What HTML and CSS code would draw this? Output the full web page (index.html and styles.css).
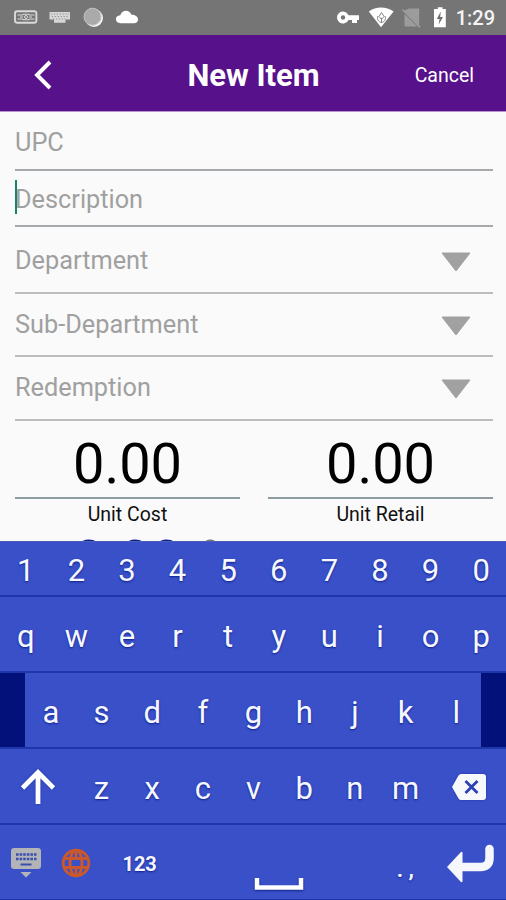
FILE: index.html
```html
<!DOCTYPE html>
<html lang="en">
<head>
    <meta charset="UTF-8">
    <meta name="viewport" content="width=device-width, initial-scale=1.0">
    <title>New Item</title>
    <link rel="stylesheet" href="styles.css">
</head>
<body>

    <div class="status-bar">
        <svg class="status-icons" width="506" height="34" viewBox="0 0 506 34">
            <!-- left: vpn box, keyboard, sync, cloud -->
            <g fill="none" stroke="#d9d9d9" stroke-width="1.9">
                <rect x="15" y="11.2" width="21.4" height="11.6" rx="2.2"/>
                <path d="M17.5 15h4.500l2-.7h4l2 .7h4.500M17.500 19h4.500l2 .8h4l2-.8h4.500M20 17h3M29 17h3" stroke-width="1.1"/>
                <circle cx="26" cy="17" r="1.5" stroke-width="1"/>
            </g>
            <path fill="#d6d6d6" d="M49.500 12h20.500v7.500h-4.500v3.200h-11.500v-3.200h-4.500z"/>
            <path stroke="#8d8d8d" stroke-width="1" stroke-dasharray="1.2 1.7" d="M51 14h18M52 16.500h16M53 19h13"/>
            <circle cx="94" cy="18" r="9" fill="#f2f2f2"/>
            <circle cx="92.500" cy="16.700" r="8.500" fill="#aaa" stroke="#c4c4c4" stroke-width="1"/>
            <path fill="#fff" d="M120.500 23.200c-6 0-6-7.700-.3-7.900 1.500-5.700 9-6.500 11.300-.6 4-.3 6.500 2.300 6.500 4.700 0 2.200-1.600 3.800-4 3.800z"/>
            <!-- right: key, wifi, no sim, battery -->
            <path fill="#fff" fill-rule="evenodd" d="M348.500 15.200a6 6 0 1 0 0 4.700h3.500v3.200h5v-3.200h2v-4.700zM343 15.300a2.200 2.200 0 1 1 0 4.400 2.200 2.200 0 0 1 0-4.400z"/>
            <path fill="#fff" d="M368.800 11.500c7-5.300 17.500-5.300 24.800 0L381 27.200z"/>
            <path fill="none" stroke="#858585" stroke-width="1" d="M381.500 12.500l-2.500 4 2.500 2.800 2.500-2.800zM378 16c-1.500 3 .5 6 3.500 6.500 3-.5 5-3.500 3.500-6.500M381.500 18v5"/>
            <path fill="#9c9c9c" d="M409 8.500h10.200v17l-14.700-14.700zM404.500 13.800v12.800h12.700z"/>
            <path stroke="#a0a0a0" stroke-width="1.500" d="M402.500 9.500l17.500 17.700"/>
            <path fill="#fff" d="M434 9h3.800V7.300h4.700V9h3.300v18.300H434z"/>
            <path fill="#6f6f6f" d="M440.800 11.500l-4 7.500h2.700l-.8 5.500 4.300-7.500h-2.800z"/>
        </svg>
        <span class="clock">1:29</span>
    </div>

    <div class="header">
        <svg class="back" width="20" height="32" viewBox="0 0 20 32">
            <path d="M17 3L4 16l13 13" fill="none" stroke="#fff" stroke-width="3.900"/>
        </svg>
        <h1>New Item</h1>
        <span class="cancel">Cancel</span>
    </div>

    <div class="form">
        <div class="field upc">UPC</div>
        <div class="field description"><span class="cursor"></span>Description</div>
        <div class="field select">Department
            <svg width="30" height="20" viewBox="0 0 30 20"><path d="M1 1h28L15 19z" fill="#a1a1a1" stroke="#a1a1a1" stroke-linejoin="round"/></svg>
        </div>
        <div class="field select">Sub-Department
            <svg width="30" height="20" viewBox="0 0 30 20"><path d="M1 1h28L15 19z" fill="#a1a1a1" stroke="#a1a1a1" stroke-linejoin="round"/></svg>
        </div>
        <div class="field select">Redemption
            <svg width="30" height="20" viewBox="0 0 30 20"><path d="M1 1h28L15 19z" fill="#a1a1a1" stroke="#a1a1a1" stroke-linejoin="round"/></svg>
        </div>
        <div class="prices">
            <div class="price">
                <div class="amount">0.00</div>
                <div class="label">Unit Cost</div>
            </div>
            <div class="price">
                <div class="amount">0.00</div>
                <div class="label">Unit Retail</div>
            </div>
        </div>
        <div class="margin-row"><span>0.00</span><span class="percent">%</span></div>
    </div>

    <div class="keyboard">
        <div class="keys numbers">
            <span>1</span><span>2</span><span>3</span><span>4</span><span>5</span><span>6</span><span>7</span><span>8</span><span>9</span><span>0</span>
        </div>
        <div class="keys">
            <span>q</span><span>w</span><span>e</span><span>r</span><span>t</span><span>y</span><span>u</span><span>i</span><span>o</span><span>p</span>
        </div>
        <div class="keys middle">
            <div class="edge"></div>
            <span>a</span><span>s</span><span>d</span><span>f</span><span>g</span><span>h</span><span>j</span><span>k</span><span>l</span>
            <div class="edge"></div>
        </div>
        <div class="keys letters">
            <span class="wide">
                <svg width="36" height="36" viewBox="0 0 36 36"><path d="M18 35V4M2.500 19L18 3.500 33.500 19" fill="none" stroke="#fff" stroke-width="4.800"/></svg>
            </span>
            <span>z</span><span>x</span><span>c</span><span>v</span><span>b</span><span>n</span><span>m</span>
            <span class="wide">
                <svg class="delete" width="36" height="28" viewBox="0 0 36 28">
                    <path d="M10 1h22q3 0 3 3v20q0 3-3 3H10q-1.500 0-2.500-1.500L1 14 7.500 2.500Q8.500 1 10 1z" fill="#f7f8fc"/>
                    <path d="M14.500 8l12 12M26.500 8l-12 12" stroke="#2b41b5" stroke-width="2.800"/>
                </svg>
            </span>
        </div>
        <div class="keys bottom">
            <span class="icon">
                <svg width="32" height="32" viewBox="0 0 32 32">
                    <path d="M4 1h24q3 0 3 3v15q0 3-3 3H4q-3 0-3-3V4q0-3 3-3zM10.500 25h11L16 30.500z" fill="#b3b4b8"/>
                    <path d="M6 7.500h20.500M6 12h20.500" stroke="#3a4fae" stroke-width="2.500" stroke-dasharray="2.600 1"/>
                    <path d="M10.500 17.500h11" stroke="#3a4fae" stroke-width="2"/>
                </svg>
            </span>
            <span class="icon">
                <svg width="30" height="30" viewBox="0 0 30 30">
                    <g fill="none" stroke="#c9582e" stroke-width="3">
                        <circle cx="15" cy="15" r="12.800"/>
                        <ellipse cx="15" cy="15" rx="6" ry="12.800"/>
                        <path d="M15 2v10M15 18v10M3.500 10.500h23M3.500 19.500h23" stroke-width="2.800"/>
                    </g>
                </svg>
            </span>
            <span class="mode">123</span>
            <span class="space">
                <svg width="52" height="18" viewBox="0 0 52 18"><path d="M4 3v9.500h44V3" fill="none" stroke="#fff" stroke-width="4.500"/></svg>
            </span>
            <span class="punctuation">. ,</span>
            <span class="enter">
                <svg width="50" height="40" viewBox="0 0 50 40">
                    <path d="M43.500 6v9q0 9-9 9H15" fill="none" stroke="#f7f8fc" stroke-width="8.500" stroke-linecap="round"/>
                    <path d="M1 24L15 9q1.500-1 1.500 1v28q0 2-1.500 1z" fill="#f7f8fc"/>
                </svg>
            </span>
        </div>
    </div>

</body>
</html>
```
FILE: styles.css
```css
* {
    box-sizing: border-box;
}

body {
    margin: 0;
    width: 506px;
    height: 900px;
    overflow: hidden;
    font-family: Roboto, sans-serif;
    background-color: #fafafa;
}

svg {
    display: block;
}

.status-bar {
    position: relative;
    height: 35px;
    background-color: #757575;
}

.clock {
    position: absolute;
    right: 11px;
    top: 6px;
    font-size: 20px;
    line-height: 24px;
    color: #f5f5f5;
    font-weight: 500;
}

.header {
    display: grid;
    grid-template-columns: 140px 1fr 140px;
    align-items: center;
    height: 77px;
    background-color: #57118b;
    border-bottom: 1px solid #b795cc;
    color: #fff;
}

.back {
    margin-left: 33px;
    margin-top: 3px;
}

.header h1 {
    margin: 0;
    padding-top: 5px;
    padding-left: 1px;
    font-size: 31px;
    line-height: 36px;
    font-weight: 700;
    text-align: center;
    white-space: nowrap;
}

.cancel {
    padding-right: 32px;
    padding-top: 4px;
    font-size: 19.5px;
    text-align: right;
}

.form {
    height: 429px;
    padding: 0 13px 0 15px;
    overflow: hidden;
}

.field {
    display: flex;
    align-items: center;
    justify-content: space-between;
    font-size: 25.3px;
    color: #a0a0a0;
    border-bottom: 2px solid #a6a9ab;
}

.upc {
    height: 59px;
    padding-top: 4px;
}

.description {
    position: relative;
    height: 56px;
    padding-top: 2px;
}

.cursor {
    position: absolute;
    left: 0;
    top: 9px;
    width: 2px;
    height: 34px;
    background-color: #12856d;
}

.select {
    height: 67px;
    padding-top: 2px;
    border-bottom-color: #bcbcbc;
}

.select + .select {
    height: 63px;
    padding-top: 0;
}

.select + .select:nth-child(5) {
    height: 64px;
    padding-bottom: 2px;
}

.select svg {
    margin-right: 22px;
    margin-top: 3px;
}

.prices {
    display: grid;
    grid-template-columns: 1fr 1fr;
    gap: 28px;
}

.price {
    text-align: center;
}

.amount {
    height: 78px;
    padding-top: 10px;
    font-size: 56px;
    line-height: 66px;
    color: #000;
    border-bottom: 2px solid #8f9ba3;
}

.label {
    padding-top: 4px;
    font-size: 19.5px;
    line-height: 24px;
    color: #111;
}

.margin-row {
    display: flex;
    align-items: flex-start;
    height: 20px;
    padding-left: 58px;
    padding-top: 1px;
    font-size: 56px;
    line-height: 66px;
    color: #10208a;
}

.percent {
    margin-left: 17px;
    color: #777;
}

.keyboard {
    height: 359px;
    background-color: #3950c8;
    border-top: 1px solid #4a5db8;
    color: #f7f8ff;
}

.keys {
    display: flex;
    height: 76px;
    border-bottom: 2px solid #1f36aa;
    font-size: 31px;
    text-shadow: 0 1px 2px #10208a;
}

.keys span {
    display: flex;
    flex: 1;
    align-items: center;
    justify-content: center;
    padding-top: 5px;
    padding-left: 1px;
}

.keys.numbers span {
    padding-top: 3px;
}

.keys span.wide {
    flex: 1.5;
    padding-top: 2px;
}

.numbers {
    height: 55px;
}

.edge {
    width: 25px;
    background-color: #03127a;
}

.wide svg {
    filter: drop-shadow(0 0 1px #1f36aa);
}

.bottom {
    display: grid;
    grid-template-columns: 1fr 1fr 1.5fr 4fr 1fr 1.5fr;
    font-size: 20px;
}

.keys .icon {
    padding-top: 2px;
}

.bottom .mode {
    padding-top: 3px;
    font-weight: 700;
}

.bottom .space {
    align-items: flex-end;
    padding-bottom: 6px;
}

.space svg {
    filter: drop-shadow(0 1px 1px #10208a);
}

.bottom .punctuation {
    padding-top: 14px;
    font-size: 22px;
    font-weight: 700;
}

.bottom .enter {
    padding-top: 2px;
    padding-left: 6px;
}
```
